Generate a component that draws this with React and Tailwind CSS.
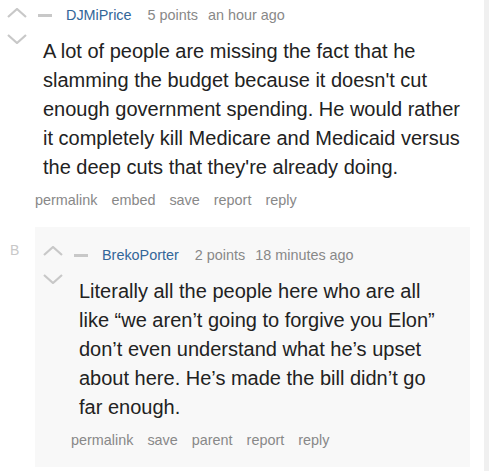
import React from "react";

const Chevron = ({ down }) => (
  <svg width="20" height="10" viewBox="0 0 20 10" className="block">
    <polyline
      points={down ? "1,1 10,9 19,1" : "1,9 10,1 19,9"}
      fill="none"
      stroke="#c8c8c8"
      strokeWidth="2.2"
    />
  </svg>
);

function Tagline({ name, points, time }) {
  return (
    <div className="flex items-center h-[20px] text-[14.4px] leading-[20px]">
      <span className="ml-[3px] w-[14px] h-[3px] bg-[#c8c8c8]" />
      <span className="ml-[14px] text-[#336699]">{name}</span>
      <span className="ml-[16px] text-[#888888]">{points}</span>
      <span className="ml-[10px] text-[#888888]">{time}</span>
    </div>
  );
}

function Actions({ items }) {
  return (
    <div className="mt-[8px] flex gap-[14px] text-[14.4px] leading-[20px] text-[#888888]">
      {items.map((t) => (
        <span key={t}>{t}</span>
      ))}
    </div>
  );
}

export default function App() {
  return (
    <div className="flex h-[471px] w-[489px] overflow-hidden bg-white font-['Liberation_Sans',Arial,sans-serif]">
      <div className="flex-1 pt-[5px]">
        {/* top-level comment */}
        <div className="flex">
          <div className="ml-[7px] w-[20px] pt-[3px] flex flex-col">
            <Chevron />
            <div className="mt-[16px]">
              <Chevron down />
            </div>
          </div>
          <div className="ml-[8px]">
            <Tagline name="DJMiPrice" points="5 points" time="an hour ago" />
            <p className="mt-[12px] ml-[8px] w-[418px] text-[20px] leading-[29px] text-[#222222]">
              A lot of people are missing the fact that he slamming the budget
              because it doesn't cut enough government spending. He would
              rather it completely kill Medicare and Medicaid versus the deep
              cuts that they're already doing.
            </p>
            <Actions items={["permalink", "embed", "save", "report", "reply"]} />
          </div>
        </div>

        {/* nested comment */}
        <div className="mt-[17px] flex">
          <span className="w-[35px] pl-[10px] pt-[13px] text-[14px] leading-[20px] text-[#c8c8c8]">
            B
          </span>
          <div className="w-[435px] bg-[#f8f8f8] pt-[18px] pb-[17px] flex">
            <div className="ml-[8px] w-[20px] pt-[1px] flex flex-col">
              <Chevron />
              <div className="mt-[18px]">
                <Chevron down />
              </div>
            </div>
            <div className="ml-[8px]">
              <Tagline name="BrekoPorter" points="2 points" time="18 minutes ago" />
              <p className="mt-[12px] ml-[8px] w-[371px] text-[20px] leading-[29px] text-[#222222]">
                Literally all the people here who are all like “we aren’t going
                to forgive you Elon” don’t even understand what he’s upset
                about here. He’s made the bill didn’t go far enough.
              </p>
              <Actions items={["permalink", "save", "parent", "report", "reply"]} />
            </div>
          </div>
        </div>
      </div>
      <div className="w-[5px] bg-[#f0f0f0]" />
    </div>
  );
}
